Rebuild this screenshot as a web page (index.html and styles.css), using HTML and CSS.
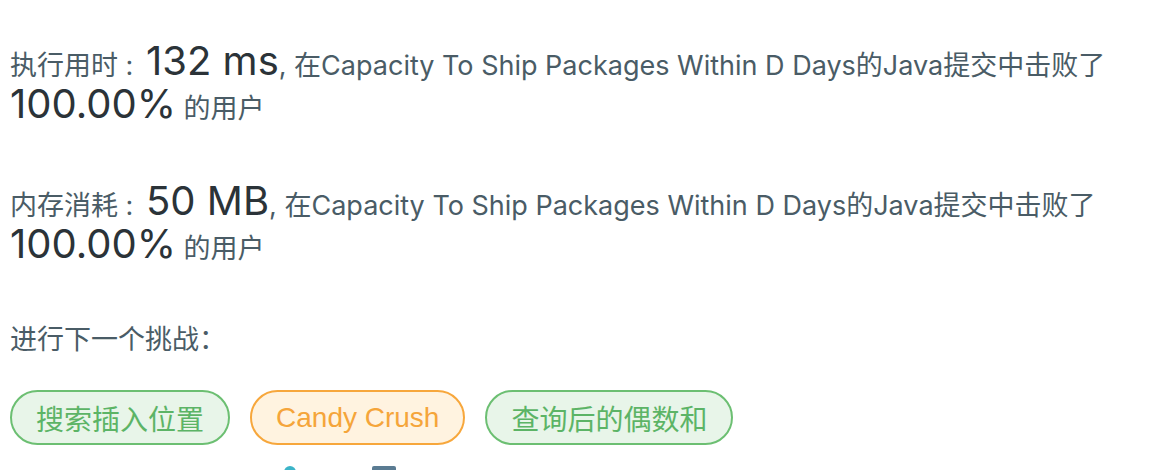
FILE: index.html
```html
<!DOCTYPE html>
<html lang="zh">
<head>
<meta charset="utf-8">
<link rel="stylesheet" href="styles.css">
</head>
<body>
<div class="page">
  <p class="stat"><span class="label">执行用时 :</span> <span class="big">132 ms</span>, 在Capacity To Ship Packages Within D Days的Java提交中击败了<br><span class="big">100.00%</span> 的用户</p>
  <p class="stat"><span class="label">内存消耗 :</span> <span class="big">50 MB</span>, 在Capacity To Ship Packages Within D Days的Java提交中击败了<br><span class="big">100.00%</span> 的用户</p>
  <p class="next">进行下一个挑战：</p>
  <div class="tags">
    <span class="tag green">搜索插入位置</span>
    <span class="tag orange">Candy Crush</span>
    <span class="tag green">查询后的偶数和</span>
  </div>
  <div class="share">
    <span class="icon-circle"></span>
    <span class="icon-rect"></span>
  </div>
</div>
</body>
</html>
```
FILE: styles.css
```css
html, body {
  margin: 0;
  padding: 0;
  background: #ffffff;
}
.page {
  padding: 44px 0 0 10px;
  font-family: "Inter", "Noto Sans CJK SC", sans-serif;
  color: #4a5c66;
  font-size: 27px;
}
.stat {
  margin: 0;
  line-height: 43px;
}
.stat + .stat {
  margin-top: 54px;
}
.label {
  margin-right: 5px;
}
.big {
  display: inline-block;
  font-size: 40px;
  line-height: 32px;
  color: #2b3338;
}
.next {
  margin: 48px 0 0 0;
  line-height: 43px;
}
.tags {
  display: flex;
  gap: 20px;
  margin-top: 29px;
}
.tag {
  display: inline-flex;
  align-items: center;
  height: 51px;
  padding: 0 24px;
  border-radius: 28px;
  border: 2px solid;
  font-family: "Liberation Sans", "Noto Sans CJK SC", sans-serif;
  font-size: 28px;
}
.green {
  border-color: #6cbf72;
  background: #e8f5e9;
  color: #5cb466;
}
.orange {
  border-color: #f7a73c;
  background: #fff3e0;
  color: #f5a53a;
}
.share {
  display: flex;
  margin-top: 21px;
  padding-left: 274px;
  gap: 76px;
}
.icon-circle {
  width: 12px;
  height: 12px;
  border-radius: 50%;
  background: #3cb4c8;
}
.icon-rect {
  width: 24px;
  height: 12px;
  border-radius: 2px;
  background: #5a7b92;
}
```
